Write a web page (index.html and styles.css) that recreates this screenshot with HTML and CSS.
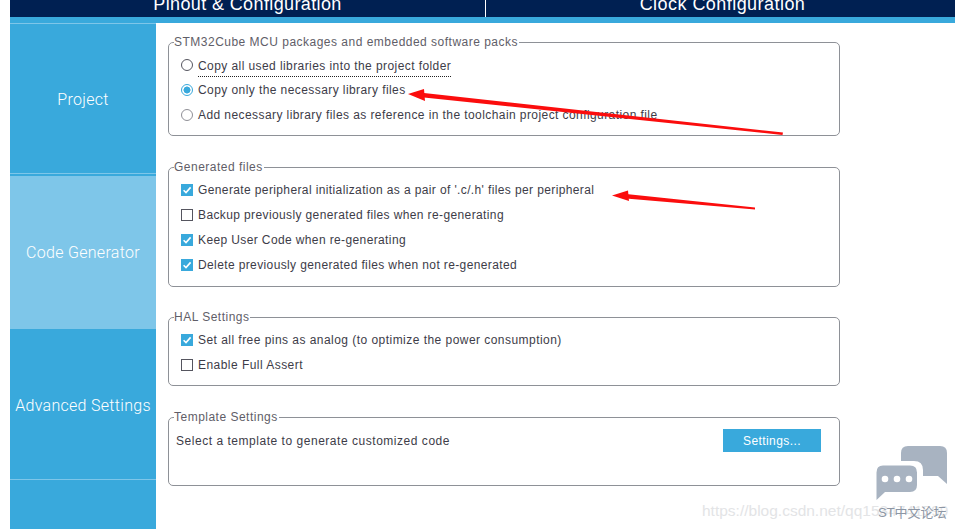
FILE: index.html
```html
<!DOCTYPE html>
<html lang="en">
<head>
<meta charset="utf-8">
<title>Project Manager</title>
<link rel="stylesheet" href="styles.css">
</head>
<body>
<div class="page">
  <header class="tabs">
    <div class="tab tab-first"><span>Pinout &amp; Configuration</span></div>
    <div class="tab tab-second"><span>Clock Configuration</span></div>
  </header>
  <div class="stripe"></div>
  <div class="main">
    <nav class="side">
      <div class="side-item side-project">Project</div>
      <div class="side-item side-code">Code Generator</div>
      <div class="side-item side-advanced">Advanced Settings</div>
      <div class="side-rest"></div>
    </nav>
    <div class="content">
      <fieldset class="group group-packs">
        <legend>STM32Cube MCU packages and embedded software packs</legend>
        <div class="row"><span class="radio"></span><span class="focused">Copy all used libraries into the project folder</span></div>
        <div class="row"><span class="radio radio-on"></span><span>Copy only the necessary library files</span></div>
        <div class="row"><span class="radio radio-off"></span><span>Add necessary library files as reference in the toolchain project configuration file</span></div>
      </fieldset>
      <fieldset class="group group-files">
        <legend>Generated files</legend>
        <div class="row"><span class="check check-on"><svg viewBox="0 0 12 12"><path d="M2.6 6.2 5 8.6 9.6 3.4"/></svg></span><span>Generate peripheral initialization as a pair of '.c/.h' files per peripheral</span></div>
        <div class="row"><span class="check"></span><span>Backup previously generated files when re-generating</span></div>
        <div class="row"><span class="check check-on"><svg viewBox="0 0 12 12"><path d="M2.6 6.2 5 8.6 9.6 3.4"/></svg></span><span>Keep User Code when re-generating</span></div>
        <div class="row"><span class="check check-on"><svg viewBox="0 0 12 12"><path d="M2.6 6.2 5 8.6 9.6 3.4"/></svg></span><span>Delete previously generated files when not re-generated</span></div>
      </fieldset>
      <fieldset class="group group-hal">
        <legend>HAL Settings</legend>
        <div class="row"><span class="check check-on"><svg viewBox="0 0 12 12"><path d="M2.6 6.2 5 8.6 9.6 3.4"/></svg></span><span>Set all free pins as analog (to optimize the power consumption)</span></div>
        <div class="row"><span class="check"></span><span>Enable Full Assert</span></div>
      </fieldset>
      <fieldset class="group group-template">
        <legend>Template Settings</legend>
        <div class="template-row">
          <span>Select a template to generate customized code</span>
          <button class="settings" type="button">Settings...</button>
        </div>
      </fieldset>
    </div>
  </div>

  <svg class="arrows" viewBox="0 0 955 529" aria-hidden="true">
    <path d="M783 132.500 424 93 424 97.500 782.500 135Z" fill="#fb0d0d"/>
    <path d="M408 94 424 89 425 101Z" fill="#fb0d0d"/>
    <path d="M755 207.500 626 194 626 198.500 755 209.500Z" fill="#fb0d0d"/>
    <path d="M612 195.500 628 190.500 629 201Z" fill="#fb0d0d"/>
  </svg>

  <div class="mark-url">https://blog.csdn.net/qq1534741599</div>
  <svg class="mark-icon" viewBox="0 0 72 56" aria-hidden="true">
    <path class="bubble" d="M32 0H64Q71 0 71 7V38L62 30H47V24Q47 15 38 15H25V7Q25 0 32 0Z"/>
    <path class="bubble" d="M7 19.500H34Q41 19.500 41 26.500V39Q41 46 34 46H9L.5 54V26.500Q.5 19.500 7 19.500Z"/>
    <circle class="dot" cx="9" cy="33" r="3.300"/>
    <circle class="dot" cx="21" cy="33" r="3.300"/>
    <circle class="dot" cx="33" cy="33" r="3.300"/>
  </svg>
  <div class="mark-name">ST中文论坛</div>
</div>
</body>
</html>
```

FILE: styles.css
```css
* { box-sizing: border-box; }
html, body { margin: 0; height: 100%; overflow: hidden; background: #fff; }
body { font-family: "Liberation Sans", Arial, sans-serif; color: #3d3c48; }
.page { position: relative; width: 955px; height: 529px; padding-left: 10px; overflow: hidden; }

.tabs { display: flex; height: 17px; background: #002052; color: #fff; overflow: hidden; }
.tab { flex: 1 1 0; display: flex; justify-content: center; align-items: flex-end; font-size: 18px; letter-spacing: .38px; line-height: 20px; padding-bottom: 3px; }
.tab span { display: block; flex: none; }
.tab-first { flex: 0 0 476px; border-right: 1px solid #fff; }
.tab-second { padding-left: 4px; letter-spacing: .45px; }
.stripe { height: 6px; background: #39a9dc; }

.main { display: flex; height: 506px; }
.side { flex: 0 0 146px; display: flex; flex-direction: column; color: #fff; background: #39a9dc; font-family: Roboto, "Liberation Sans", sans-serif; font-weight: 300; font-size: 16px; letter-spacing: .3px; }
.side-item { display: flex; align-items: center; justify-content: center; white-space: nowrap; }
.side-project { height: 151px; margin-bottom: 2px; padding-top: 1px; border-top: 1px solid #7ec6e9; border-bottom: 1px solid #7ec6e9; }
.side-code { height: 153px; background: #7ec6e9; padding-bottom: 1px; }
.side-advanced { height: 151px; border-bottom: 1px solid #7ec6e9; padding-top: 2px; }
.side-rest { flex: 1; }

.content { flex: 1; padding: 0 115px 0 12px; font-size: 12px; letter-spacing: .42px; }
.group { margin: 0; padding: 0 0 0 13px; border: 1px solid #8e9197; border-radius: 5px; min-width: 0; display: flex; flex-direction: column; }
.group legend { padding: 0 1px 0 0; margin-left: -8px; line-height: 16px; font-size: 12px; letter-spacing: .49px; color: #5f5e68; }
.group-packs { margin-top: 11px; height: 102px; }
.group-files { margin-top: 23px; height: 128px; letter-spacing: .38px; }
.group-hal { margin-top: 22px; height: 77px; letter-spacing: .46px; }
.group-template { margin-top: 23px; height: 77px; }

.row { display: flex; align-items: center; gap: 5px; height: 25px; white-space: nowrap; }
.group .row:first-of-type { margin-top: 2px; }
.focused { display: block; height: 18px; margin-top: 7px; border-bottom: 1px dotted #222; line-height: 15px; }
.row > .radio, .row > .check { margin-left: -1px; }

.radio { flex: none; width: 12px; height: 12px; border: 1px solid #55555f; border-radius: 50%; background: #fff; }
.radio-off { border-color: #8f8f96; }
.radio-on { border-color: #39a9dc; background: radial-gradient(circle, #39a9dc 0 3.200px, #fff 3.800px); }
.check { flex: none; width: 12px; height: 12px; border: 1px solid #55555f; background: #fff; display: block; }
.check-on { border: 0; background: #39a9dc; }
.check svg { display: block; width: 12px; height: 12px; fill: none; stroke: #fff; stroke-width: 1.600; }

.template-row { display: flex; justify-content: space-between; align-items: flex-start; margin-left: -6px; padding-right: 18px; padding-top: 4px; white-space: nowrap; }
.template-row span { line-height: 16px; padding-top: 4px; letter-spacing: .53px; }
.settings { width: 98px; height: 23px; border: 0; padding: 0; background: #39a9dc; color: #fff; font: inherit; letter-spacing: .4px; }

.arrows { position: absolute; left: 0; top: 0; width: 955px; height: 529px; pointer-events: none; }
.mark-url { position: absolute; left: 702px; top: 501px; font-size: 15.500px; line-height: 20px; color: #e3e4e6; white-space: nowrap; }
.mark-icon { position: absolute; left: 876px; top: 446px; width: 72px; height: 56px; }
.bubble { fill: #a8b3c1; }
.dot { fill: #fff; }
.mark-name { position: absolute; left: 878px; top: 505px; font: 13px/16px "Liberation Sans", "Noto Sans CJK SC", sans-serif; color: #8c96a4; white-space: nowrap; }
```
